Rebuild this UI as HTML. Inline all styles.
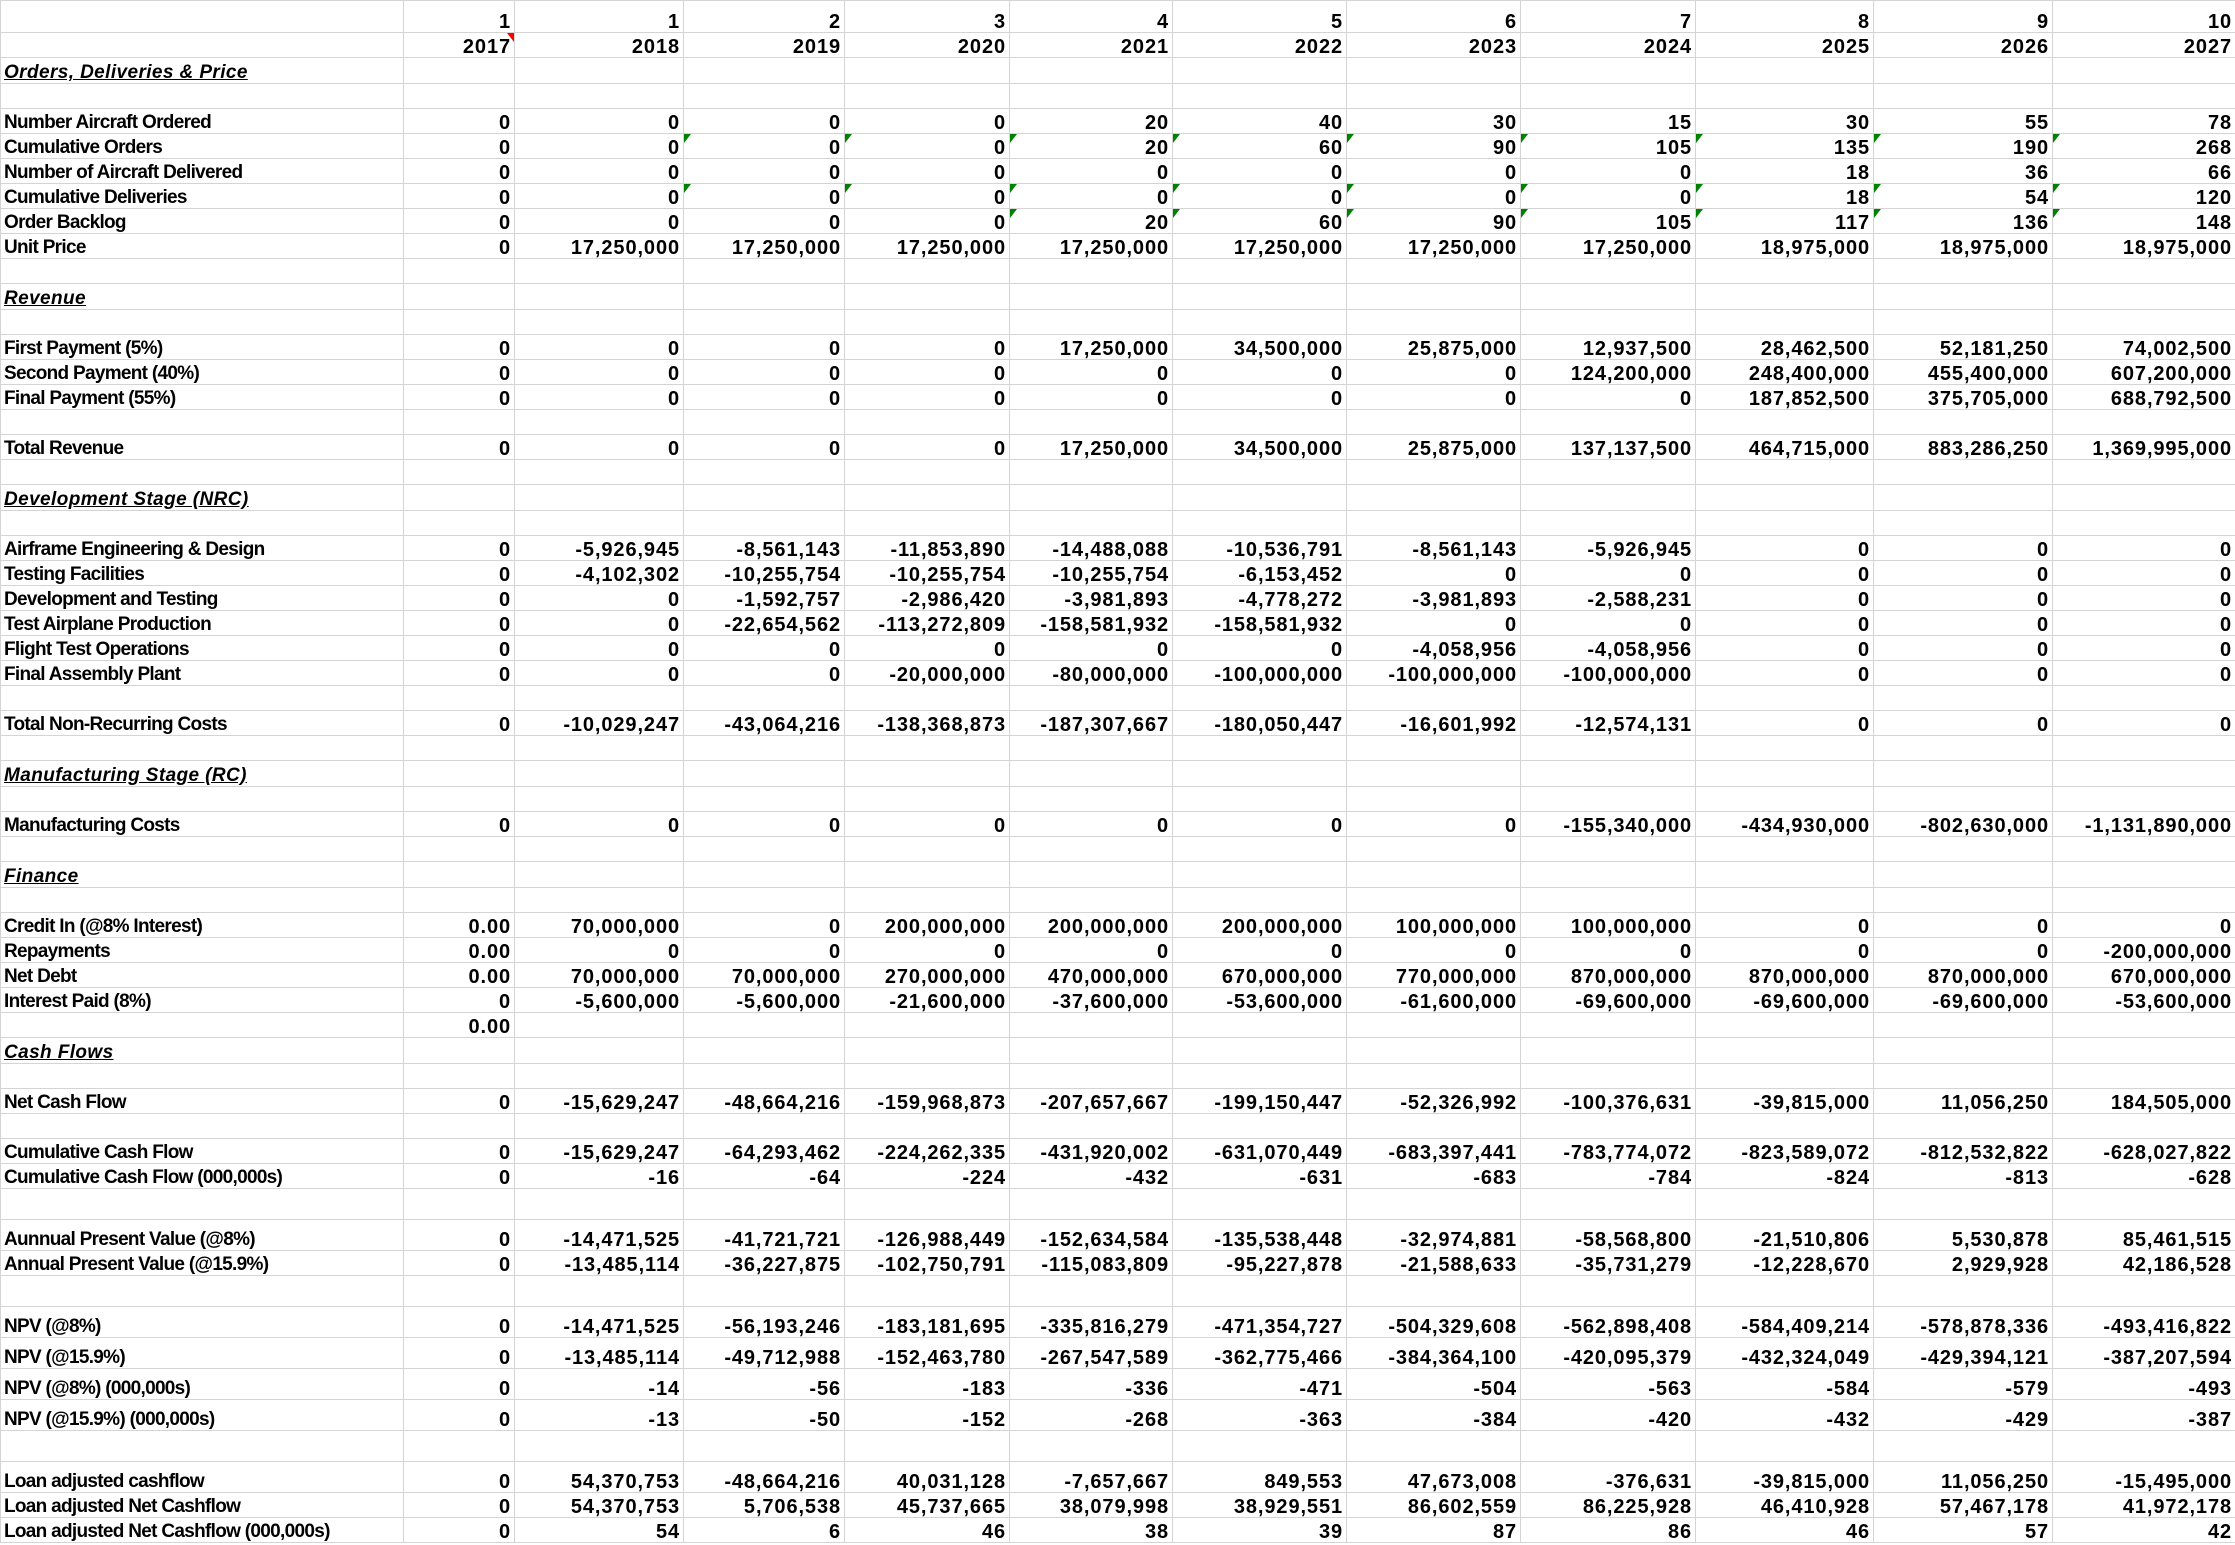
<!DOCTYPE html>
<html><head><meta charset="utf-8">
<style>
html,body{margin:0;padding:0;background:#fff;}
body{width:2235px;height:1545px;overflow:hidden;}
table{border-collapse:collapse;table-layout:fixed;width:2235px;font-family:"Liberation Sans",Arial,sans-serif;font-weight:bold;font-size:20px;color:#000;letter-spacing:0.9px;}
td{border:1px solid #d4d4d4;padding:0 3px 0 3px;height:24px;line-height:20px;vertical-align:bottom;text-align:right;white-space:nowrap;overflow:visible;position:relative;}
td:first-child{text-align:left;padding-left:3px;font-size:19px;letter-spacing:-0.7px;}
td.s{font-style:italic;text-decoration:underline;letter-spacing:0.4px !important;}
tr.a td{height:31px;}
tr.h td{height:25px;}
tr.t td{height:30px;}
td.g::before{content:"";position:absolute;left:0;top:0;border-top:9px solid #008000;border-right:7px solid transparent;}
td.r::after{content:"";position:absolute;right:0;top:0;border-top:9px solid #ff0000;border-left:7px solid transparent;}
</style></head><body>
<table>
<colgroup><col style="width:403px"><col style="width:111px"><col style="width:169px"><col style="width:161px"><col style="width:165px"><col style="width:163px"><col style="width:174px"><col style="width:174px"><col style="width:175px"><col style="width:178px"><col style="width:179px"><col style="width:183px"></colgroup>
<tr class="a"><td></td><td>1</td><td>1</td><td>2</td><td>3</td><td>4</td><td>5</td><td>6</td><td>7</td><td>8</td><td>9</td><td>10</td></tr>
<tr><td></td><td class="r">2017</td><td>2018</td><td>2019</td><td>2020</td><td>2021</td><td>2022</td><td>2023</td><td>2024</td><td>2025</td><td>2026</td><td>2027</td></tr>
<tr class="h"><td class="s">Orders, Deliveries &amp; Price</td><td></td><td></td><td></td><td></td><td></td><td></td><td></td><td></td><td></td><td></td><td></td></tr>
<tr><td></td><td></td><td></td><td></td><td></td><td></td><td></td><td></td><td></td><td></td><td></td><td></td></tr>
<tr><td>Number Aircraft Ordered</td><td>0</td><td>0</td><td>0</td><td>0</td><td>20</td><td>40</td><td>30</td><td>15</td><td>30</td><td>55</td><td>78</td></tr>
<tr><td>Cumulative Orders</td><td>0</td><td>0</td><td class="g">0</td><td class="g">0</td><td class="g">20</td><td class="g">60</td><td class="g">90</td><td class="g">105</td><td class="g">135</td><td class="g">190</td><td class="g">268</td></tr>
<tr><td>Number of Aircraft Delivered</td><td>0</td><td>0</td><td>0</td><td>0</td><td>0</td><td>0</td><td>0</td><td>0</td><td>18</td><td>36</td><td>66</td></tr>
<tr><td>Cumulative Deliveries</td><td>0</td><td>0</td><td class="g">0</td><td class="g">0</td><td class="g">0</td><td class="g">0</td><td class="g">0</td><td class="g">0</td><td class="g">18</td><td class="g">54</td><td class="g">120</td></tr>
<tr><td>Order Backlog</td><td>0</td><td>0</td><td>0</td><td>0</td><td class="g">20</td><td class="g">60</td><td class="g">90</td><td class="g">105</td><td class="g">117</td><td class="g">136</td><td class="g">148</td></tr>
<tr><td>Unit Price</td><td>0</td><td>17,250,000</td><td>17,250,000</td><td>17,250,000</td><td>17,250,000</td><td>17,250,000</td><td>17,250,000</td><td>17,250,000</td><td>18,975,000</td><td>18,975,000</td><td>18,975,000</td></tr>
<tr><td></td><td></td><td></td><td></td><td></td><td></td><td></td><td></td><td></td><td></td><td></td><td></td></tr>
<tr class="h"><td class="s">Revenue</td><td></td><td></td><td></td><td></td><td></td><td></td><td></td><td></td><td></td><td></td><td></td></tr>
<tr><td></td><td></td><td></td><td></td><td></td><td></td><td></td><td></td><td></td><td></td><td></td><td></td></tr>
<tr><td>First Payment (5%)</td><td>0</td><td>0</td><td>0</td><td>0</td><td>17,250,000</td><td>34,500,000</td><td>25,875,000</td><td>12,937,500</td><td>28,462,500</td><td>52,181,250</td><td>74,002,500</td></tr>
<tr><td>Second Payment (40%)</td><td>0</td><td>0</td><td>0</td><td>0</td><td>0</td><td>0</td><td>0</td><td>124,200,000</td><td>248,400,000</td><td>455,400,000</td><td>607,200,000</td></tr>
<tr><td>Final Payment (55%)</td><td>0</td><td>0</td><td>0</td><td>0</td><td>0</td><td>0</td><td>0</td><td>0</td><td>187,852,500</td><td>375,705,000</td><td>688,792,500</td></tr>
<tr><td></td><td></td><td></td><td></td><td></td><td></td><td></td><td></td><td></td><td></td><td></td><td></td></tr>
<tr><td>Total Revenue</td><td>0</td><td>0</td><td>0</td><td>0</td><td>17,250,000</td><td>34,500,000</td><td>25,875,000</td><td>137,137,500</td><td>464,715,000</td><td>883,286,250</td><td>1,369,995,000</td></tr>
<tr><td></td><td></td><td></td><td></td><td></td><td></td><td></td><td></td><td></td><td></td><td></td><td></td></tr>
<tr class="h"><td class="s">Development Stage (NRC)</td><td></td><td></td><td></td><td></td><td></td><td></td><td></td><td></td><td></td><td></td><td></td></tr>
<tr><td></td><td></td><td></td><td></td><td></td><td></td><td></td><td></td><td></td><td></td><td></td><td></td></tr>
<tr><td>Airframe Engineering &amp; Design</td><td>0</td><td>-5,926,945</td><td>-8,561,143</td><td>-11,853,890</td><td>-14,488,088</td><td>-10,536,791</td><td>-8,561,143</td><td>-5,926,945</td><td>0</td><td>0</td><td>0</td></tr>
<tr><td>Testing Facilities</td><td>0</td><td>-4,102,302</td><td>-10,255,754</td><td>-10,255,754</td><td>-10,255,754</td><td>-6,153,452</td><td>0</td><td>0</td><td>0</td><td>0</td><td>0</td></tr>
<tr><td>Development and Testing</td><td>0</td><td>0</td><td>-1,592,757</td><td>-2,986,420</td><td>-3,981,893</td><td>-4,778,272</td><td>-3,981,893</td><td>-2,588,231</td><td>0</td><td>0</td><td>0</td></tr>
<tr><td>Test Airplane Production</td><td>0</td><td>0</td><td>-22,654,562</td><td>-113,272,809</td><td>-158,581,932</td><td>-158,581,932</td><td>0</td><td>0</td><td>0</td><td>0</td><td>0</td></tr>
<tr><td>Flight Test Operations</td><td>0</td><td>0</td><td>0</td><td>0</td><td>0</td><td>0</td><td>-4,058,956</td><td>-4,058,956</td><td>0</td><td>0</td><td>0</td></tr>
<tr><td>Final Assembly Plant</td><td>0</td><td>0</td><td>0</td><td>-20,000,000</td><td>-80,000,000</td><td>-100,000,000</td><td>-100,000,000</td><td>-100,000,000</td><td>0</td><td>0</td><td>0</td></tr>
<tr><td></td><td></td><td></td><td></td><td></td><td></td><td></td><td></td><td></td><td></td><td></td><td></td></tr>
<tr><td>Total Non-Recurring Costs</td><td>0</td><td>-10,029,247</td><td>-43,064,216</td><td>-138,368,873</td><td>-187,307,667</td><td>-180,050,447</td><td>-16,601,992</td><td>-12,574,131</td><td>0</td><td>0</td><td>0</td></tr>
<tr><td></td><td></td><td></td><td></td><td></td><td></td><td></td><td></td><td></td><td></td><td></td><td></td></tr>
<tr class="h"><td class="s">Manufacturing Stage (RC)</td><td></td><td></td><td></td><td></td><td></td><td></td><td></td><td></td><td></td><td></td><td></td></tr>
<tr><td></td><td></td><td></td><td></td><td></td><td></td><td></td><td></td><td></td><td></td><td></td><td></td></tr>
<tr><td>Manufacturing Costs</td><td>0</td><td>0</td><td>0</td><td>0</td><td>0</td><td>0</td><td>0</td><td>-155,340,000</td><td>-434,930,000</td><td>-802,630,000</td><td>-1,131,890,000</td></tr>
<tr><td></td><td></td><td></td><td></td><td></td><td></td><td></td><td></td><td></td><td></td><td></td><td></td></tr>
<tr class="h"><td class="s">Finance</td><td></td><td></td><td></td><td></td><td></td><td></td><td></td><td></td><td></td><td></td><td></td></tr>
<tr><td></td><td></td><td></td><td></td><td></td><td></td><td></td><td></td><td></td><td></td><td></td><td></td></tr>
<tr><td>Credit In (@8% Interest)</td><td>0.00</td><td>70,000,000</td><td>0</td><td>200,000,000</td><td>200,000,000</td><td>200,000,000</td><td>100,000,000</td><td>100,000,000</td><td>0</td><td>0</td><td>0</td></tr>
<tr><td>Repayments</td><td>0.00</td><td>0</td><td>0</td><td>0</td><td>0</td><td>0</td><td>0</td><td>0</td><td>0</td><td>0</td><td>-200,000,000</td></tr>
<tr><td>Net Debt</td><td>0.00</td><td>70,000,000</td><td>70,000,000</td><td>270,000,000</td><td>470,000,000</td><td>670,000,000</td><td>770,000,000</td><td>870,000,000</td><td>870,000,000</td><td>870,000,000</td><td>670,000,000</td></tr>
<tr><td>Interest Paid (8%)</td><td>0</td><td>-5,600,000</td><td>-5,600,000</td><td>-21,600,000</td><td>-37,600,000</td><td>-53,600,000</td><td>-61,600,000</td><td>-69,600,000</td><td>-69,600,000</td><td>-69,600,000</td><td>-53,600,000</td></tr>
<tr><td></td><td>0.00</td><td></td><td></td><td></td><td></td><td></td><td></td><td></td><td></td><td></td><td></td></tr>
<tr class="h"><td class="s">Cash Flows </td><td></td><td></td><td></td><td></td><td></td><td></td><td></td><td></td><td></td><td></td><td></td></tr>
<tr><td></td><td></td><td></td><td></td><td></td><td></td><td></td><td></td><td></td><td></td><td></td><td></td></tr>
<tr><td>Net Cash Flow</td><td>0</td><td>-15,629,247</td><td>-48,664,216</td><td>-159,968,873</td><td>-207,657,667</td><td>-199,150,447</td><td>-52,326,992</td><td>-100,376,631</td><td>-39,815,000</td><td>11,056,250</td><td>184,505,000</td></tr>
<tr><td></td><td></td><td></td><td></td><td></td><td></td><td></td><td></td><td></td><td></td><td></td><td></td></tr>
<tr><td>Cumulative Cash Flow</td><td>0</td><td>-15,629,247</td><td>-64,293,462</td><td>-224,262,335</td><td>-431,920,002</td><td>-631,070,449</td><td>-683,397,441</td><td>-783,774,072</td><td>-823,589,072</td><td>-812,532,822</td><td>-628,027,822</td></tr>
<tr><td>Cumulative Cash Flow (000,000s)</td><td>0</td><td>-16</td><td>-64</td><td>-224</td><td>-432</td><td>-631</td><td>-683</td><td>-784</td><td>-824</td><td>-813</td><td>-628</td></tr>
<tr class="t"><td></td><td></td><td></td><td></td><td></td><td></td><td></td><td></td><td></td><td></td><td></td><td></td></tr>
<tr class="t"><td>Aunnual Present Value (@8%)</td><td>0</td><td>-14,471,525</td><td>-41,721,721</td><td>-126,988,449</td><td>-152,634,584</td><td>-135,538,448</td><td>-32,974,881</td><td>-58,568,800</td><td>-21,510,806</td><td>5,530,878</td><td>85,461,515</td></tr>
<tr><td>Annual Present Value (@15.9%)</td><td>0</td><td>-13,485,114</td><td>-36,227,875</td><td>-102,750,791</td><td>-115,083,809</td><td>-95,227,878</td><td>-21,588,633</td><td>-35,731,279</td><td>-12,228,670</td><td>2,929,928</td><td>42,186,528</td></tr>
<tr class="t"><td></td><td></td><td></td><td></td><td></td><td></td><td></td><td></td><td></td><td></td><td></td><td></td></tr>
<tr class="t"><td>NPV (@8%)</td><td>0</td><td>-14,471,525</td><td>-56,193,246</td><td>-183,181,695</td><td>-335,816,279</td><td>-471,354,727</td><td>-504,329,608</td><td>-562,898,408</td><td>-584,409,214</td><td>-578,878,336</td><td>-493,416,822</td></tr>
<tr class="t"><td>NPV (@15.9%)</td><td>0</td><td>-13,485,114</td><td>-49,712,988</td><td>-152,463,780</td><td>-267,547,589</td><td>-362,775,466</td><td>-384,364,100</td><td>-420,095,379</td><td>-432,324,049</td><td>-429,394,121</td><td>-387,207,594</td></tr>
<tr class="t"><td>NPV (@8%) (000,000s)</td><td>0</td><td>-14</td><td>-56</td><td>-183</td><td>-336</td><td>-471</td><td>-504</td><td>-563</td><td>-584</td><td>-579</td><td>-493</td></tr>
<tr class="t"><td>NPV (@15.9%) (000,000s)</td><td>0</td><td>-13</td><td>-50</td><td>-152</td><td>-268</td><td>-363</td><td>-384</td><td>-420</td><td>-432</td><td>-429</td><td>-387</td></tr>
<tr class="t"><td></td><td></td><td></td><td></td><td></td><td></td><td></td><td></td><td></td><td></td><td></td><td></td></tr>
<tr class="t"><td>Loan adjusted cashflow</td><td>0</td><td>54,370,753</td><td>-48,664,216</td><td>40,031,128</td><td>-7,657,667</td><td>849,553</td><td>47,673,008</td><td>-376,631</td><td>-39,815,000</td><td>11,056,250</td><td>-15,495,000</td></tr>
<tr><td>Loan adjusted Net Cashflow</td><td>0</td><td>54,370,753</td><td>5,706,538</td><td>45,737,665</td><td>38,079,998</td><td>38,929,551</td><td>86,602,559</td><td>86,225,928</td><td>46,410,928</td><td>57,467,178</td><td>41,972,178</td></tr>
<tr><td>Loan adjusted Net Cashflow (000,000s)</td><td>0</td><td>54</td><td>6</td><td>46</td><td>38</td><td>39</td><td>87</td><td>86</td><td>46</td><td>57</td><td>42</td></tr>
</table>
</body></html>
